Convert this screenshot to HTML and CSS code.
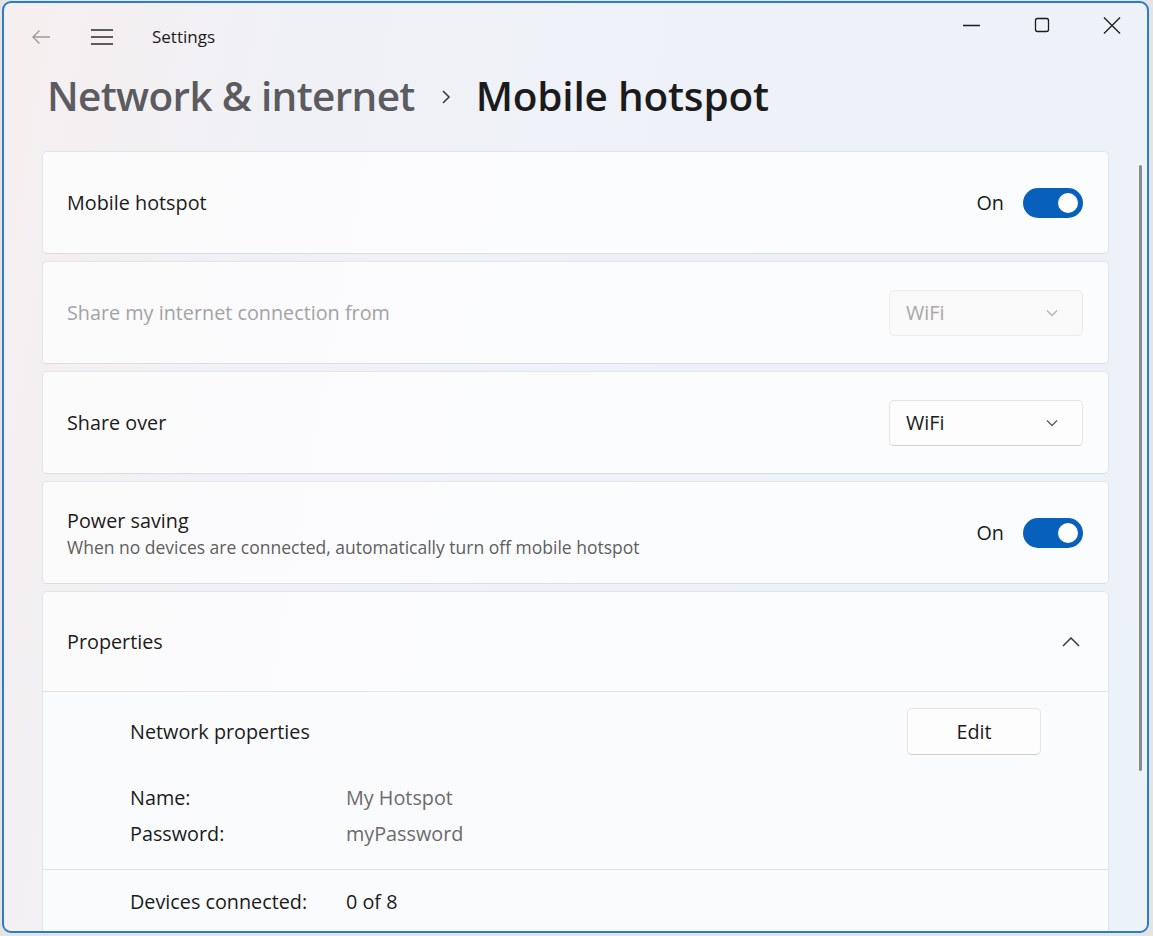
FILE: index.html
```html
<!DOCTYPE html>
<html lang="en">
  <head>
    <meta charset="UTF-8" />
    <title>Settings</title>
    <link rel="stylesheet" href="styles.css">
  </head>
  <body>
    <div class="window">
      <div class="titlebar">
        <div class="titlebar-left">
          <svg class="back" width="20" height="16" viewBox="0 0 20 16">
            <path d="M19 8H2M8.5 1.5L2 8l6.5 6.5" fill="none" stroke="#9c9c9c" stroke-width="1.4" />
          </svg>
          <svg class="menu" width="22" height="16" viewBox="0 0 22 16">
            <path d="M0 1h22M0 8h22M0 15h22" fill="none" stroke="#2b2b2b" stroke-width="1.6" />
          </svg>
          <span class="app-title">Settings</span>
        </div>
        <div class="controls">
          <svg width="70" height="46" viewBox="0 0 70 46">
            <path d="M26 23.5h17" stroke="#1b1b1b" stroke-width="1.3" />
          </svg>
          <svg width="70" height="46" viewBox="0 0 70 46">
            <rect x="28.5" y="16.5" width="13" height="13" rx="2" fill="none" stroke="#1b1b1b" stroke-width="1.3" />
          </svg>
          <svg width="70" height="46" viewBox="0 0 70 46">
            <path d="M27 15.5l16 16M43 15.5l-16 16" stroke="#1b1b1b" stroke-width="1.3" />
          </svg>
        </div>
      </div>

      <h1 class="page-header">
        <span class="crumb">Network &amp; internet</span>
        <svg class="crumb-sep" width="10" height="16" viewBox="0 0 10 16">
          <path d="M2 2l6 6-6 6" fill="none" stroke="#3c3c3c" stroke-width="1.6" />
        </svg>
        <span class="current">Mobile hotspot</span>
      </h1>

      <div class="content">
        <div class="card">
          <div class="card-label">Mobile hotspot</div>
          <div class="toggle-wrap">
            <span class="toggle-text">On</span>
            <span class="toggle"><span class="knob"></span></span>
          </div>
        </div>

        <div class="card">
          <div class="card-label disabled">Share my internet connection from</div>
          <div class="dropdown is-disabled">
            <span>WiFi</span>
            <svg width="12" height="8" viewBox="0 0 12 8">
              <path d="M1 1.5l5 5 5-5" fill="none" stroke="#b5b5b5" stroke-width="1.3" />
            </svg>
          </div>
        </div>

        <div class="card">
          <div class="card-label">Share over</div>
          <div class="dropdown">
            <span>WiFi</span>
            <svg width="12" height="8" viewBox="0 0 12 8">
              <path d="M1 1.5l5 5 5-5" fill="none" stroke="#5a5a5a" stroke-width="1.3" />
            </svg>
          </div>
        </div>

        <div class="card">
          <div class="card-label">
            <div>Power saving</div>
            <div class="card-desc">When no devices are connected, automatically turn off mobile hotspot</div>
          </div>
          <div class="toggle-wrap">
            <span class="toggle-text">On</span>
            <span class="toggle"><span class="knob"></span></span>
          </div>
        </div>

        <div class="expander">
          <div class="expander-head">
            <div class="card-label">Properties</div>
            <svg class="chevron-up" width="18" height="10" viewBox="0 0 18 10">
              <path d="M1 9l8-8 8 8" fill="none" stroke="#3a3a3a" stroke-width="1.5" />
            </svg>
          </div>
          <div class="expander-section first">
            <div class="prop-head">
              <span>Network properties</span>
              <button type="button" class="btn">Edit</button>
            </div>
            <div class="prop-row">
              <span class="prop-key">Name:</span>
              <span class="prop-val">My Hotspot</span>
            </div>
            <div class="prop-row">
              <span class="prop-key">Password:</span>
              <span class="prop-val">myPassword</span>
            </div>
          </div>
          <div class="expander-section">
            <div class="prop-row">
              <span class="prop-key">Devices connected:</span>
              <span class="prop-val dark">0 of 8</span>
            </div>
          </div>
        </div>
      </div>

      <div class="scrollbar"></div>
    </div>
  </body>
</html>
```

FILE: styles.css
```css
* {
  box-sizing: border-box;
}

body {
  margin: 0;
  height: 936px;
  overflow: hidden;
  background-color: #e4e4e4;
  font-family: "Open Sans", "Noto Sans", sans-serif;
  color: #1b1b1b;
}

.window {
  position: relative;
  width: 1147px;
  height: 932px;
  margin: 1px 0 0 2px;
  border: 2px solid #2f7cc6;
  border-radius: 9px;
  overflow: hidden;
  background: linear-gradient(100deg, #f6efef 0%, #f0f1f6 22%, #eef2f8 55%, #ebf2f8 100%);
}

.titlebar {
  display: flex;
  justify-content: space-between;
  height: 56px;
}

.titlebar-left {
  display: flex;
  align-items: center;
  padding: 17px 0 0 27px;
  height: 50px;
}

.back {
  margin-right: 40px;
}

.menu {
  margin-right: 39px;
}

.app-title {
  font-size: 17px;
  color: #1b1b1b;
}

.controls {
  display: flex;
  margin-top: -1px;
}

.page-header {
  display: flex;
  align-items: center;
  margin: 1px 0 0 43px;
  height: 70px;
  font-size: 40.5px;
  font-weight: 600;
  letter-spacing: -0.2px;
}

.crumb {
  color: #5b5b60;
  letter-spacing: -0.65px;
}

.crumb-sep {
  margin: 4px 25px 0 26px;
}

.current {
  color: #1b1b1b;
}

.content {
  display: flex;
  flex-direction: column;
  gap: 7px;
  padding: 21px 38px 0 38px;
}

.card {
  display: flex;
  align-items: center;
  justify-content: space-between;
  height: 103px;
  padding: 0 25px 0 24px;
  background-color: rgba(255, 255, 255, 0.72);
  border: 1px solid #e4e5e8;
  border-bottom-color: #dcdde0;
  border-radius: 5px;
}

.card-label {
  font-size: 19.8px;
  color: #1b1b1b;
}

.card-label.disabled {
  color: #a3a3a3;
}

.card-desc {
  margin-top: 1px;
  font-size: 17.5px;
  color: #5f5f5f;
}

.toggle-wrap {
  display: flex;
  align-items: center;
  gap: 19px;
}

.toggle-text {
  font-size: 19.8px;
}

.toggle {
  display: flex;
  align-items: center;
  justify-content: flex-end;
  width: 60px;
  height: 30px;
  padding-right: 5px;
  border-radius: 15px;
  background-color: #0760bc;
}

.knob {
  width: 20px;
  height: 20px;
  border-radius: 50%;
  background-color: #fff;
}

.dropdown {
  display: flex;
  align-items: center;
  justify-content: space-between;
  width: 194px;
  height: 46px;
  padding: 0 24px 0 16px;
  font-size: 19.8px;
  background-color: #fdfdfd;
  border: 1px solid #e5e5e5;
  border-bottom-color: #cfcfcf;
  border-radius: 5px;
}

.dropdown.is-disabled {
  color: #a8a8a8;
  background-color: #f9f9f9;
  border-color: #ececec;
}

.expander {
  background-color: rgba(255, 255, 255, 0.72);
  border: 1px solid #e4e5e8;
  border-radius: 5px 5px 0 0;
}

.expander-head {
  display: flex;
  align-items: center;
  justify-content: space-between;
  height: 100px;
  padding: 0 28px 0 24px;
  border-bottom: 1.5px solid #e2e4e6;
}

.expander-section {
  padding: 13px 67px 18px 87px;
  background-color: rgba(249, 251, 252, 0.7);
}

.expander-section.first {
  padding-top: 16px;
  border-bottom: 1.5px solid #e2e4e6;
}

.prop-head {
  display: flex;
  align-items: center;
  justify-content: space-between;
  height: 47px;
  margin-bottom: 24px;
  font-size: 19.8px;
}

.btn {
  width: 134px;
  height: 47px;
  font-family: inherit;
  font-size: 19.8px;
  color: #1b1b1b;
  background-color: #fdfdfd;
  border: 1px solid #e5e5e5;
  border-bottom-color: #cdcdcd;
  border-radius: 5px;
}

.prop-row {
  display: flex;
  align-items: center;
  height: 36px;
  font-size: 19.8px;
}

.prop-key {
  width: 216px;
}

.prop-val {
  color: #6b6b6b;
}

.prop-val.dark {
  color: #1b1b1b;
}

.scrollbar {
  position: absolute;
  top: 162px;
  left: 1135px;
  width: 3px;
  height: 606px;
  border-radius: 2px;
  background-color: #8a8a8a;
}
```
